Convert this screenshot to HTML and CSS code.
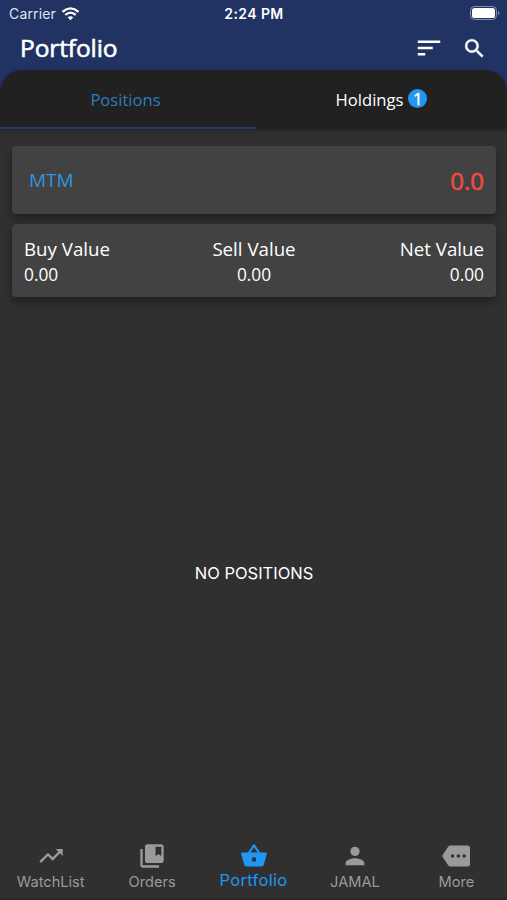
FILE: index.html
```html
<!DOCTYPE html>
<html lang="en">
<head>
<meta charset="utf-8">
<title>Portfolio</title>
<link rel="stylesheet" href="styles.css">
</head>
<body>
<div class="app">
  <header class="header">
    <div class="status">
      <div class="carrier"><span>Carrier</span>
        <svg class="wifi" viewBox="0 0 18 14"><path d="M1 4.8Q9-2 17 4.8" /><path d="M3.8 7.8Q9 3.4 14.2 7.8"/><path class="dot" d="M6.2 10.3Q9 8 11.8 10.3L9 13.3Z"/></svg>
      </div>
      <span class="time">2:24 PM</span>
      <svg class="battery" viewBox="0 0 30 15"><rect class="shell" x=".5" y=".5" width="26" height="13" rx="4"/><rect class="level" x="2" y="2" width="23" height="10" rx="2.6"/><path class="tip" d="M28 5q3 2 0 4z"/></svg>
    </div>
    <div class="toolbar">
      <h1 class="title">Portfolio</h1>
      <svg class="icon sort" viewBox="0 0 24 24"><path d="M3 18h6v-2H3v2zM3 6v2h18V6H3zm0 7h12v-2H3v2z"/></svg>
      <svg class="icon search" viewBox="0 0 24 24"><path d="M15.5 14h-.79l-.28-.27A6.47 6.47 0 0 0 16 9.500 6.500 6.500 0 1 0 9.500 16c1.610 0 3.090-.59 4.230-1.570l.27.28v.79l5 4.990L20.490 19l-4.990-5zm-6 0C7.010 14 5 11.990 5 9.500S7.010 5 9.500 5 14 7.010 14 9.500 11.990 14 9.500 14z"/></svg>
    </div>
  </header>
  <nav class="tabs">
    <div class="tab active">Positions</div>
    <div class="tab"><span>Holdings</span><span class="badge">1</span></div>
  </nav>
  <main class="content">
    <section class="card mtm"><span class="mtm-label">MTM</span><span class="mtm-value">0.0</span></section>
    <section class="card values">
      <div class="value"><span class="label">Buy Value</span><span class="amount">0.00</span></div>
      <div class="value center"><span class="label">Sell Value</span><span class="amount">0.00</span></div>
      <div class="value right"><span class="label">Net Value</span><span class="amount">0.00</span></div>
    </section>
    <div class="empty">NO POSITIONS</div>
  </main>
  <nav class="bottom">
    <div class="item"><svg class="nav-icon" viewBox="0 0 24 24"><path d="M16 6l2.290 2.290-4.880 4.880-4-4L2 16.590 3.410 18l6-6 4 4 6.300-6.290L22 12V6z"/></svg><span>WatchList</span></div>
    <div class="item"><svg class="nav-icon" viewBox="0 0 24 24"><path d="M4 6H2v14c0 1.100.9 2 2 2h14v-2H4V6z"/><path d="M20 2H8c-1.100 0-2 .9-2 2v12c0 1.100.9 2 2 2h12c1.100 0 2-.9 2-2V4c0-1.100-.9-2-2-2zm0 10l-2.500-1.500L15 12V4h5v8z"/></svg><span>Orders</span></div>
    <div class="item current"><svg class="nav-icon" viewBox="0 0 24 24"><path d="M17.210 9l-4.380-6.560a1 1 0 0 0-1.660 0L6.790 9H2c-.55 0-1 .45-1 1 0 .09.010.18.040.27l2.540 9.270c.23.840 1 1.460 1.920 1.460h13c.92 0 1.690-.62 1.930-1.460l2.540-9.270L23 10c0-.55-.45-1-1-1h-4.790zM9 9l3-4.400L15 9H9zm3 8a2 2 0 1 1 0-4 2 2 0 0 1 0 4z"/></svg><span>Portfolio</span></div>
    <div class="item"><svg class="nav-icon" viewBox="0 0 24 24"><path d="M12 12a4 4 0 1 0 0-8 4 4 0 0 0 0 8zm0 2c-2.670 0-8 1.340-8 4v2h16v-2c0-2.660-5.330-4-8-4z"/></svg><span>JAMAL</span></div>
    <div class="item"><svg class="nav-icon" viewBox="0 0 24 24"><path d="M22 3H7c-.69 0-1.230.35-1.590.88L0 12l5.410 8.110c.36.530.97.89 1.660.89H22c1.100 0 2-.9 2-2V5c0-1.100-.9-2-2-2zM9 13.500a1.500 1.500 0 1 1 0-3 1.500 1.500 0 0 1 0 3zm5 0a1.500 1.500 0 1 1 0-3 1.500 1.500 0 0 1 0 3zm5 0a1.500 1.500 0 1 1 0-3 1.500 1.500 0 0 1 0 3z"/></svg><span>More</span></div>
  </nav>
</div>
</body>
</html>
```
FILE: styles.css
```css
* { box-sizing: border-box; }
body { margin: 0; background: #303030; color: #fff; font-family: "Open Sans", "Noto Sans", sans-serif; }
svg { display: block; flex: none; }
.app { width: 507px; height: 900px; display: flex; flex-direction: column; background: #303030; overflow: hidden; }
.header { height: 92px; flex: none; background: #203363; }
.status { height: 27px; display: grid; grid-template-columns: 1fr auto 1fr; align-items: center; padding: 0 6px 0 9px; font: 14px/25px Inter, sans-serif; }
.carrier { display: flex; gap: 5px; align-items: center; color: #dfe3ec; letter-spacing: .15px; }
.wifi { width: 19px; height: 14px; fill: none; stroke: #fff; stroke-width: 2.3; }
.wifi .dot { fill: #fff; stroke: none; }
.time { font-weight: 600; font-size: 14px; letter-spacing: .4px; margin-right: 2px; }
.battery { width: 30px; height: 15px; justify-self: end; margin-right: 1px; }
.shell { fill: none; stroke: #8490b0; }
.level { fill: #fff; }
.tip { fill: #8490b0; }
.toolbar { height: 43px; display: flex; align-items: center; padding: 0 20px 0 20px; }
.title { margin: 0 auto 0 0; font-size: 24.5px; font-weight: 500; letter-spacing: -.1px; line-height: 38px; padding-bottom: 2px; -webkit-text-stroke: .6px #fff; }
.icon { fill: #fff; }
.sort { width: 30px; height: 30px; margin-right: 18px; margin-top: -1px; }
.search { width: 25px; height: 25px; margin-top: -1px; stroke: #fff; stroke-width: .4px; }
.tabs { height: 59px; margin-top: -22px; flex: none; display: flex; background: #212121; border-radius: 22px 22px 0 0; box-shadow: 0 2px 5px #0004; }
.tab { flex: 1; display: flex; align-items: center; justify-content: center; gap: 5px; padding-top: 1px; font-size: 16.600px; border-bottom: 2px solid transparent; }
.active { color: #2b7dbd; padding-right: 5px; border-color: #203876; }
.badge { width: 19px; height: 19px; margin-top: -2px; border-radius: 50%; background: #2196f3; font-size: 17px; line-height: 19px; text-align: center; -webkit-text-stroke: .4px #fff; }
.content { flex: 1; display: flex; flex-direction: column; gap: 10px; padding: 17px 11px 0 12px; }
.card { flex: none; display: flex; justify-content: space-between; background: #424242; border-radius: 4px; box-shadow: 0 5px 9px #0005; }
.mtm { height: 68px; align-items: center; padding: 0 12px 0 17px; }
.mtm-label { color: #3393df; font-size: 19px; }
.mtm-value { color: #ee4b3f; font-size: 24px; -webkit-text-stroke: .6px #ee4b3f; }
.values { height: 73px; padding: 12px 12px 0; }
.value { flex: 1; display: flex; flex-direction: column; }
.center { align-items: center; }
.right { align-items: flex-end; }
.label { font-size: 18.7px; line-height: 26px; }
.amount { font-size: 17.300px; line-height: 25px; }
.empty { flex: 1; display: flex; justify-content: center; padding-top: 256px; font: 16.5px/20px Inter, sans-serif; }
.bottom { height: 64px; flex: none; display: flex; border-bottom: 2px solid #2b252c; }
.item { flex: 1; display: flex; flex-direction: column; align-items: center; padding-top: 6px; color: #9a9a9a; font: 14.6px/25px Inter, sans-serif; }
.nav-icon { width: 28px; height: 28px; fill: currentColor; }
.current { color: #2196f3; font-size: 16.500px; line-height: 21px; letter-spacing: .3px; }
```
